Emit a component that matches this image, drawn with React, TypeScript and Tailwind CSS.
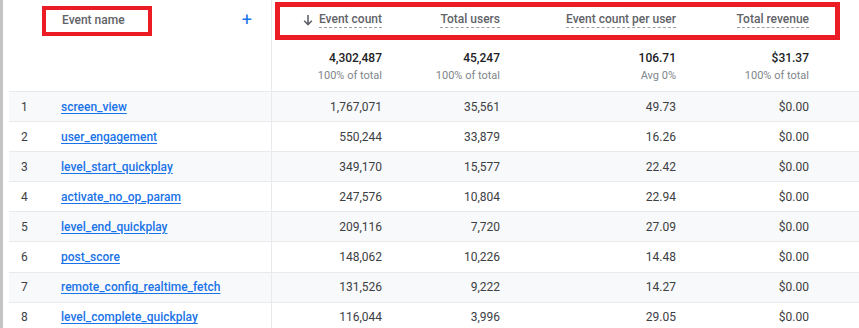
const rows = [
  ["screen_view", "1,767,071", "35,561", "49.73", "$0.00"],
  ["user_engagement", "550,244", "33,879", "16.26", "$0.00"],
  ["level_start_quickplay", "349,170", "15,577", "22.42", "$0.00"],
  ["activate_no_op_param", "247,576", "10,804", "22.94", "$0.00"],
  ["level_end_quickplay", "209,116", "7,720", "27.09", "$0.00"],
  ["post_score", "148,062", "10,226", "14.48", "$0.00"],
  ["remote_config_realtime_fetch", "131,526", "9,222", "14.27", "$0.00"],
  ["level_complete_quickplay", "116,044", "3,996", "29.05", "$0.00"],
];

const totals = [
  ["4,302,487", "100% of total"],
  ["45,247", "100% of total"],
  ["106.71", "Avg 0%"],
  ["$31.37", "100% of total"],
];

const cols = "grid grid-cols-[263px_128px_118px_176px_133px_1fr]";

function HeaderLabel({ text, arrow }: { text: string; arrow?: boolean }) {
  return (
    <div className="flex items-center justify-end gap-[6px] pr-[18px] text-[12px] font-medium text-[#5f6368]">
      {arrow && (
        <svg width="10" height="12" viewBox="0 0 10 12" className="mb-[1px]">
          <path d="M5 1v9.5M1.2 6.8L5 10.6l3.8-3.8" stroke="#5f6368" strokeWidth="1.6" fill="none" />
        </svg>
      )}
      <span className="border-b border-dashed border-[#9aa0a6] pb-[1px] leading-[14px]">{text}</span>
    </div>
  );
}

export default function App() {
  return (
    <div
      className="relative w-[859px] h-[328px] overflow-hidden bg-white flex"
      style={{ fontFamily: "Roboto, 'Liberation Sans', sans-serif" }}
    >
      <div className="w-[3px] bg-[#c4c4c4] shrink-0" />
      <div className="w-[6px] shrink-0" />
      <div className="flex-1 flex flex-col">
        {/* header */}
        <div className={`${cols} h-[40px] shrink-0 items-center`}>
          <div className="flex items-center h-full border-r border-[#e8eaed]">
            <span className="ml-[53px] text-[12px] font-medium text-[#5f6368]">Event name</span>
            <span className="ml-auto mr-[19px] text-[#1a73e8] text-[18px] leading-none">+</span>
          </div>
          <HeaderLabel text="Event count" arrow />
          <HeaderLabel text="Total users" />
          <HeaderLabel text="Event count per user" />
          <HeaderLabel text="Total revenue" />
          <div />
        </div>
        {/* totals */}
        <div className={`${cols} h-[51px] shrink-0`}>
          <div className="border-r border-[#e8eaed]" />
          {totals.map(([v, s]) => (
            <div key={v} className="flex flex-col items-end pr-[18px] pt-[10px]">
              <span className="text-[12px] font-medium text-[#202124] leading-[16px]">{v}</span>
              <span className="mt-[3px] text-[11px] text-[#80868b] leading-[14px]">{s}</span>
            </div>
          ))}
          <div />
        </div>
        {rows.map((r, i) => (
          <div
            key={r[0]}
            className={`${cols} h-[30.1px] shrink-0 items-center border-t border-[#e8eaed] ${i % 2 === 0 ? "bg-[#f8f9fa]" : "bg-white"}`}
          >
            <div className="flex items-center h-full border-r border-[#e8eaed]">
              <span className="w-[52px] pl-[12px] text-[12px] text-[#3c4043]">{i + 1}</span>
              <a href="#" className="text-[12px] font-medium text-[#1a73e8] underline underline-offset-2">
                {r[0]}
              </a>
            </div>
            {r.slice(1).map((v, j) => (
              <span key={j} className="text-right pr-[18px] text-[12px] text-[#3c4043]">
                {v}
              </span>
            ))}
            <div />
          </div>
        ))}
      </div>

      {/* annotation boxes */}
      <div className="absolute left-[42px] top-[6px] w-[110px] h-[30px] border-[4px] border-[#ec1c24]" />
      <div className="absolute left-[275px] top-[2px] w-[565px] h-[38px] border-[5px] border-[#ec1c24]" />
    </div>
  );
}
